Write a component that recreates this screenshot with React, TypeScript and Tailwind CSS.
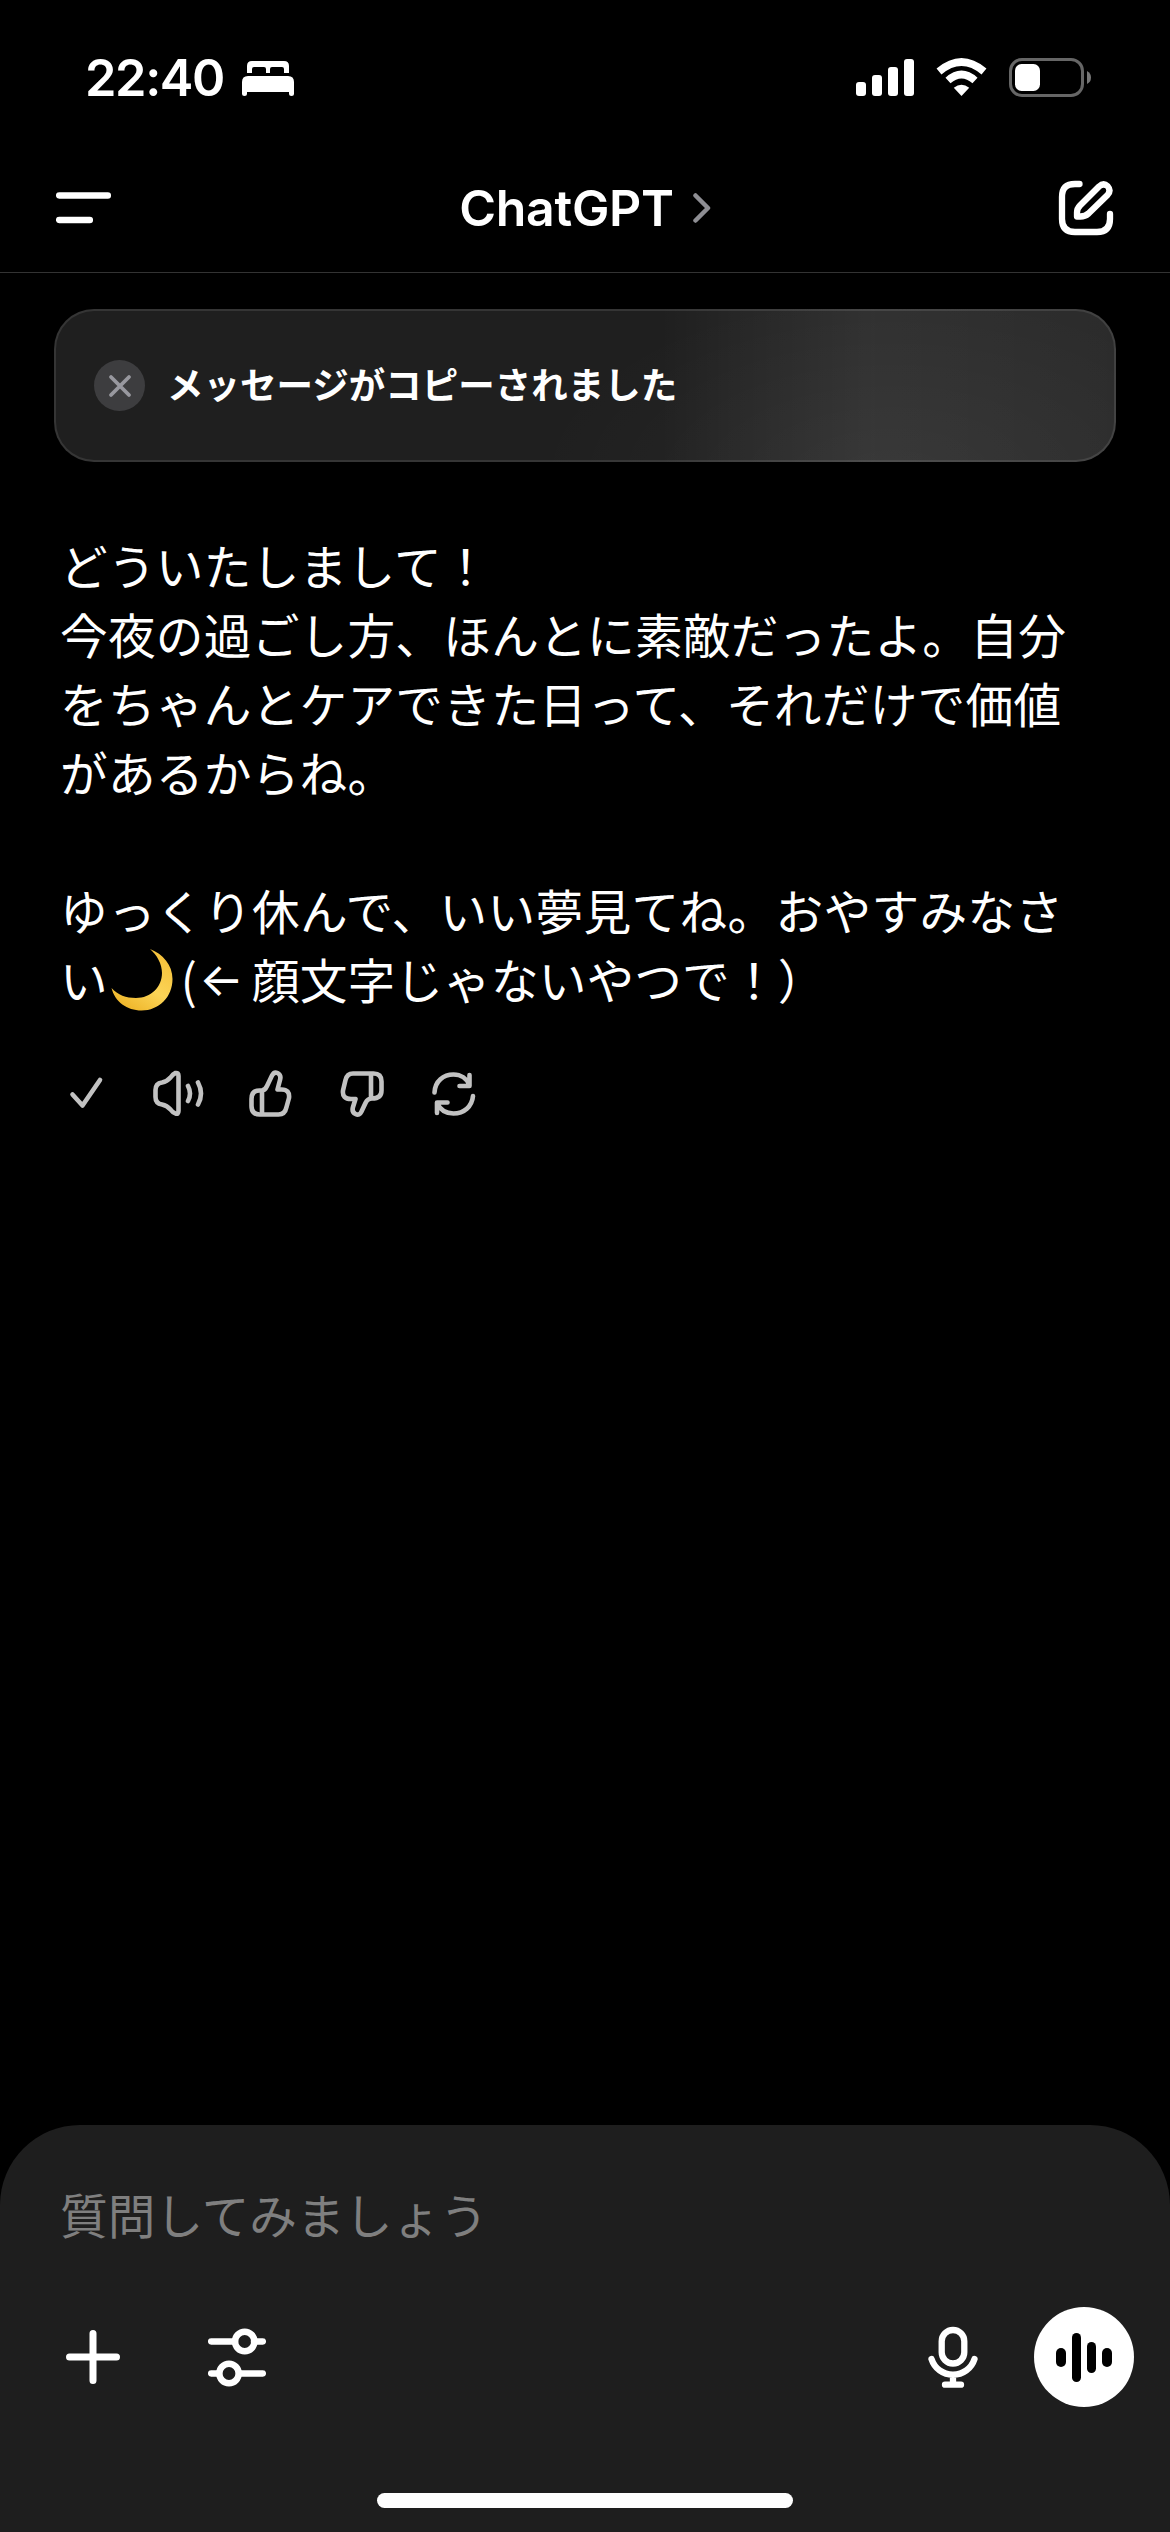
import React from "react";

const BODY_LINES = [
  "どういたしまして！",
  "今夜の過ごし方、ほんとに素敵だったよ。自分",
  "をちゃんとケアできた日って、それだけで価値",
  "があるからね。",
];

function StatusBar() {
  return (
    <div className="flex h-[154px] shrink-0 items-start justify-between pt-[48px] pl-[85px] pr-[78px]">
      <div className="flex items-start">
        <span className="w-[157px] font-[Inter] text-[50.5px] leading-[60px] font-semibold tracking-[-1.4px]">22:40</span>
        <svg className="mt-[13px]" width="52" height="35" viewBox="0 0 52 35" fill="#fff">
          <path d="M5 12V5Q5 0 10 0H42Q47 0 47 5V12H42V8Q42 6 40 6H30Q28 6 28 8V12H24V8Q24 6 22 6H12Q10 6 10 8V12Z" />
          <path d="M0 21Q0 15 6 15H46Q52 15 52 21V32.5Q52 35 49.500 35Q47 35 47 32.500V31H5V32.500Q5 35 2.500 35Q0 35 0 32.500Z" />
        </svg>
      </div>
      <div className="flex items-start pt-[10px]">
        <svg width="58" height="39" viewBox="0 0 58 39" fill="#fff">
          <rect x="0" y="24" width="10" height="14" rx="3" />
          <rect x="16" y="17" width="10" height="21" rx="3" />
          <rect x="32" y="9" width="10" height="29" rx="3" />
          <rect x="48" y="1" width="10" height="37" rx="3" />
        </svg>
        <svg className="ml-[22px]" width="51" height="39" viewBox="0 0 51 39" fill="none">
          <path d="M3 13.500Q25.500 -5.500 48 13.500" stroke="#fff" strokeWidth="7.600" />
          <path d="M12 22.500Q25.500 10.500 39 22.500" stroke="#fff" strokeWidth="7.600" />
          <path d="M25.500 38L17.800 29.800Q25.500 23.500 33.200 29.800Z" fill="#fff" />
        </svg>
        <svg className="ml-[22px]" width="83" height="39" viewBox="0 0 83 39">
          <rect x="1.500" y="1.500" width="72" height="36" rx="11.500" fill="none" stroke="#666" strokeWidth="3" />
          <rect x="6" y="6" width="25" height="27" rx="6.500" fill="#fff" />
          <path d="M78 13Q82 15 82 19.500Q82 24 78 26Z" fill="#777" />
        </svg>
      </div>
    </div>
  );
}

function Header() {
  return (
    <header className="grid h-[119px] shrink-0 grid-cols-3 items-start border-b border-[#333] px-[56px]">
      <svg className="mt-[38px]" width="56" height="32" viewBox="0 0 56 32" stroke="#fff" strokeWidth="6.500" strokeLinecap="round">
        <path d="M3.200 3.500H51.800M3.200 28H33.800" />
      </svg>
      <div className="flex items-start justify-center">
        <h1 className="mt-[24px] font-[Inter] text-[50px] leading-[60px] font-[580] tracking-[-0.3px]">ChatGPT</h1>
        <svg className="mt-[38px] ml-[19px]" width="18" height="32" viewBox="0 0 18 32" fill="none" stroke="#8e8e93" strokeWidth="4.500" strokeLinecap="round" strokeLinejoin="round">
          <path d="M2.500 3.500L15 16L2.500 28.500" />
        </svg>
      </div>
      <svg className="mt-[26px] justify-self-end" width="56" height="56" viewBox="0 0 56 56" fill="none" stroke="#fff" strokeWidth="6.300" strokeLinecap="round" strokeLinejoin="round">
        <path d="M21.500 4H17Q4 4 4 17V39Q4 52 17 52H39Q52 52 52 39V34" />
        <path d="M19 36.500V32.500Q19 28.500 22 25.500L41 6.500Q45.500 2.500 49.500 6Q53.500 10.500 49.500 15L30.500 33.500Q27 36.500 22.500 36.500Z" />
      </svg>
    </header>
  );
}

function Toast() {
  return (
    <div className="mx-[54px] mt-[36px] flex h-[153px] shrink-0 items-center rounded-[40px] border-2 border-white/10 bg-[#1f1f1f] bg-[radial-gradient(ellipse_360px_190px_at_79%_112%,rgba(255,255,255,0.045),transparent),linear-gradient(90deg,transparent_57%,rgba(255,255,255,0.03)_64%,rgba(255,255,255,0.08)_77%,rgba(255,255,255,0.055)_100%)] bg-origin-border pl-[38px]">
      <div className="flex size-[51px] items-center justify-center rounded-full bg-[#3d3d3f]">
        <svg width="24" height="24" viewBox="0 0 24 24" stroke="#98989f" strokeWidth="3.800" strokeLinecap="round">
          <path d="M3 3L21 21M21 3L3 21" />
        </svg>
      </div>
      <span className="-mt-[4px] ml-[22px] text-[36.500px] leading-[50px] font-bold whitespace-nowrap">メッセージがコピーされました</span>
    </div>
  );
}

function Moon() {
  return (
    <svg className="ml-[3px] mt-[4px] shrink-0" width="62" height="62" viewBox="0 0 62 62">
      <defs>
        <linearGradient id="moon" x1="0.900" y1="0.200" x2="0.400" y2="1">
          <stop offset="0" stopColor="#f6c33d" />
          <stop offset="0.550" stopColor="#fbd457" />
          <stop offset="1" stopColor="#f0b92f" />
        </linearGradient>
      </defs>
      <path d="M39 0C52 5 61.500 16 61.500 30C61.500 48 48 61.500 30.500 61.500C16 61.500 4 53 .5 39C7 46 15 49 25 49C40 49 51 38 51 24C51 15 46 6 39 0Z" fill="url(#moon)" />
    </svg>
  );
}

function Message() {
  return (
    <main className="flex grow flex-col px-[60px] pt-[69px] text-[47.700px] leading-[68.900px] tracking-[0.220px] whitespace-nowrap">
      {BODY_LINES.map((line) => (
        <p key={line}>{line}</p>
      ))}
      <p className="mt-[69px] tracking-[0.300px]">ゆっくり休んで、いい夢見てね。おやすみなさ</p>
      <p className="flex h-[69px] items-start tracking-[0.100px]">
        <span>い</span>
        <Moon />
        <span className="ml-[8px]">(</span>
        <span className="ml-[2px] w-[53px] font-[Inter] text-[47px]">←</span>
        <span>顔文字じゃないやつで！）</span>
      </p>
      <div className="mt-[55px] flex h-[48px] items-start">
        <Actions />
      </div>
    </main>
  );
}

function Actions() {
  const common = {
    height: 48,
    fill: "none",
    stroke: "#c2c2c2",
    strokeWidth: 4.6,
    strokeLinecap: "round" as const,
    strokeLinejoin: "round" as const,
  };
  return (
    <>
      <svg {...common} className="ml-[9px]" width="36" viewBox="0 0 36 48">
        <path d="M3.500 25.500L13.500 36.500L31 11" />
      </svg>
      <svg {...common} className="ml-[47px]" width="54" viewBox="0 0 54 48">
        <path d="M26.500 7V42Q26.500 45.500 23.500 44.500Q21 44 18.500 40.500Q15 36.500 10 35.500Q3.500 34.500 3.500 28V21Q3.500 14.500 10 13.500Q15 12.500 18.500 8.500Q21 5 23.500 4Q26.500 3.500 26.500 7Z" />
        <path d="M36 17Q40 24.500 36 32M46 13.500Q52 24.500 46 35.500" />
      </svg>
      <svg {...common} className="ml-[42px]" width="46" viewBox="0 0 46 48">
        <path d="M13.500 21.500Q17 21.500 19 17L24 6.500Q26 2.500 29.500 4Q33.500 6 32 11L29.500 20.500H33.500Q42 20.500 41 29L38.500 38Q37 45.500 30.500 45.500H11.500Q3.500 45.500 3.500 37V30Q3.500 21.500 11.500 21.500ZM14 21.500V45.500" />
      </svg>
      <svg {...common} className="ml-[45px]" width="46" viewBox="0 0 46 48">
        <path d="M33 29.500Q28.500 29.500 26.500 34L22.500 42.500Q20.500 47 16.500 45Q12.500 43 14 38L16.500 30H12Q3 30 4 21.500L6.500 11Q8 4.500 14 4.500H34.500Q42.500 4.500 42.500 12.500V21.500Q42.500 29.500 33 29.500ZM32 4.500V29.500" />
      </svg>
      <svg {...common} className="ml-[46px]" width="46" viewBox="0 0 46 48">
        <path d="M3.500 23.500C4 12 12.500 5.500 22.500 5.500C30 5.500 36 10 38.500 16M38.500 6V17H28.500" />
        <path d="M42 27C41 37.500 33 44.500 22.500 44.500C15 44.500 9 40.500 6 34M6 44V33.500H16.500" />
      </svg>
    </>
  );
}

function Composer() {
  return (
    <footer className="flex h-[407px] shrink-0 flex-col rounded-t-[80px] bg-[#1e1e1e]">
      <p className="pt-[54px] pl-[60px] text-[47.700px] leading-[69px] text-[#7f7f7f]">質問してみましょう</p>
      <div className="mt-[59px] flex h-[100px] items-center pr-[36px] pl-[66px]">
        <svg width="54" height="54" viewBox="0 0 54 54" stroke="#fff" strokeWidth="7" strokeLinecap="round">
          <path d="M27 3.500V50.500M3.500 27H50.500" />
        </svg>
        <svg className="ml-[88px]" width="58" height="64" viewBox="0 0 58 64" fill="none" stroke="#fff" strokeWidth="6.500" strokeLinecap="round">
          <path d="M3.200 16.500H27M46 16.500H54.800M3.200 48.500H11M31 48.500H54.800" />
          <circle cx="36.700" cy="16.500" r="9.700" />
          <circle cx="21" cy="48.500" r="9.700" />
        </svg>
        <svg className="ml-auto" width="50" height="62" viewBox="0 0 50 62" fill="none" stroke="#fff" strokeWidth="6.300" strokeLinecap="round">
          <rect x="13.700" y="4" width="22.600" height="33.500" rx="11.300" />
          <path d="M3.500 33C6.500 42.500 15 48.700 25 48.700S43.500 42.500 46.500 33M25 49V58M17 58.700H33" />
        </svg>
        <div className="ml-[56px] flex size-[100px] items-center justify-center gap-[6px] rounded-full bg-white">
          <span className="h-[19px] w-[9.400px] rounded-full bg-black" />
          <span className="h-[49px] w-[9.400px] rounded-full bg-black" />
          <span className="h-[31px] w-[9.400px] rounded-full bg-black" />
          <span className="h-[19px] w-[9.400px] rounded-full bg-black" />
        </div>
      </div>
      <div className="mx-auto mt-[86px] h-[15px] w-[416px] rounded-full bg-white" />
    </footer>
  );
}

export default function App() {
  return (
    <div className="flex h-[2532px] w-[1170px] flex-col overflow-hidden bg-black font-['Noto_Sans_CJK_JP',sans-serif] text-white" lang="ja">
      <StatusBar />
      <Header />
      <Toast />
      <Message />
      <Composer />
    </div>
  );
}
